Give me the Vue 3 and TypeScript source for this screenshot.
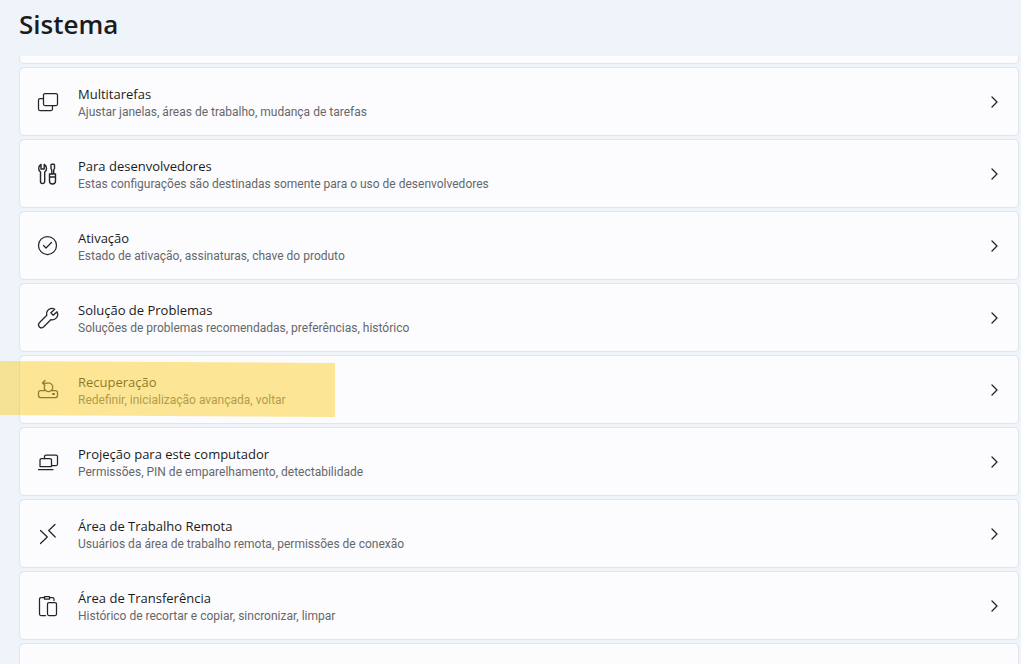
<script setup lang="ts">
interface Shape {
  d: string
  width?: number
}

interface Setting {
  title: string
  description: string
  icon: Shape[]
  highlighted?: boolean
}

const settings: Setting[] = [
  {
    title: 'Multitarefas',
    description: 'Ajustar janelas, áreas de trabalho, mudança de tarefas',
    icon: [
      { d: 'M9 4.500H20a1.500 1.500 0 0 1 1.500 1.500v9a1.500 1.500 0 0 1-1.500 1.500H9A1.500 1.500 0 0 1 7.500 15V6A1.500 1.500 0 0 1 9 4.500Z' },
      { d: 'M7.500 9.500H4A1.500 1.500 0 0 0 2.500 11v9A1.500 1.500 0 0 0 4 21.500H15A1.500 1.500 0 0 0 16.500 20V16.500' },
    ],
  },
  {
    title: 'Para desenvolvedores',
    description: 'Estas configurações são destinadas somente para o uso de desenvolvedores',
    icon: [
      { d: 'M5 3.500C2 5 2 9.500 4.500 11V20.500a2.100 2.100 0 0 0 4.200 0V11C11.200 9.500 11.200 5 8.200 3.500V8H5Z', width: 1.4 },
      { d: 'M15 4a.8.8 0 0 1 .8-.8H17.700a.8.8 0 0 1 .8.8V7.500L17.700 9V13H15.800V9L15 7.500ZM13.500 13H19.500V20a3 3 0 0 1-6 0ZM13.500 16H19.500', width: 1.4 },
    ],
  },
  {
    title: 'Ativação',
    description: 'Estado de ativação, assinaturas, chave do produto',
    icon: [
      { d: 'M2.500 12.500a9 9 0 1 0 18 0a9 9 0 1 0-18 0' },
      { d: 'M7.500 12.500L10 15L15.500 9.500' },
    ],
  },
  {
    title: 'Solução de Problemas',
    description: 'Soluções de problemas recomendadas, preferências, histórico',
    icon: [
      { d: 'M18.800 4.200C14.500 2 9.700 5.200 10.800 10.300L3.300 17.800C.8 20.800 4.800 24.500 7.500 22L14.800 14.700C19.700 15.700 23.300 11 21 6.700L17.300 10.200L14.800 7.800Z' },
    ],
  },
  {
    title: 'Recuperação',
    description: 'Redefinir, inicialização avançada, voltar',
    highlighted: true,
    icon: [
      { d: 'M9 13.500H4.500a2 2 0 0 0-2 2V18.500a2 2 0 0 0 2 2H19.500a2 2 0 0 0 2-2V15.500a2 2 0 0 0-2-2H15.500' },
      { d: 'M9 3.500L6.500 6L9 8.500M6.500 6H12.500A4.300 4.300 0 1 1 8.300 9.500' },
      { d: 'M17 17h1', width: 2 },
    ],
  },
  {
    title: 'Projeção para este computador',
    description: 'Permissões, PIN de emparelhamento, detectabilidade',
    icon: [
      { d: 'M8.500 9.500V7.500A1.500 1.500 0 0 1 10 6H20A1.500 1.500 0 0 1 21.500 7.500V15A1.500 1.500 0 0 1 20 16.500H15.500' },
      { d: 'M5.500 9.500H14A1.500 1.500 0 0 1 15.500 11V17.500H4V11A1.500 1.500 0 0 1 5.500 9.500ZM2.500 20.500H17' },
    ],
  },
  {
    title: 'Área de Trabalho Remota',
    description: 'Usuários da área de trabalho remota, permissões de conexão',
    icon: [{ d: 'M19 3.500L12.700 9.500L19.200 16M4.500 9.500L11.300 16L4.500 22.500' }],
  },
  {
    title: 'Área de Transferência',
    description: 'Histórico de recortar e copiar, sincronizar, limpar',
    icon: [
      { d: 'M8 4.500H5A1.500 1.500 0 0 0 3.500 6V21A1.500 1.500 0 0 0 5 22.500H9.500M14 4.500H16.500A1.500 1.500 0 0 1 18 6V7.500' },
      { d: 'M8.500 3.500H13.500V6H8.500ZM13 9.500H19A1.500 1.500 0 0 1 20.500 11V21A1.500 1.500 0 0 1 19 22.500H13A1.500 1.500 0 0 1 11.500 21V11A1.500 1.500 0 0 1 13 9.500Z' },
    ],
  },
]
</script>

<template>
  <main class="page">
    <h1 class="heading">Sistema</h1>
    <div class="list">
      <div class="card card-end"></div>
      <a v-for="item in settings" :key="item.title" href="#" class="card">
        <svg class="icon" viewBox="0 0 25 25" aria-hidden="true">
          <path v-for="shape in item.icon" :key="shape.d" :d="shape.d" :stroke-width="shape.width ?? 1.25" />
        </svg>
        <span class="text">
          <span class="title">{{ item.title }}</span>
          <span class="description">{{ item.description }}</span>
        </span>
        <svg class="chevron" viewBox="0 0 9 13" aria-hidden="true">
          <path d="M2 2L7 7L2 12" stroke-width="1.300" />
        </svg>
        <span v-if="item.highlighted" class="marker"></span>
      </a>
      <div class="card"></div>
    </div>
  </main>
</template>

<style>
body {
  margin: 0;
  background: #eff3fa;
}
</style>

<style scoped>
.page {
  height: 100vh;
  display: flex;
  flex-direction: column;
  overflow: hidden;
  color: #1b1b1c;
  font-family: "Open Sans", "Noto Sans", sans-serif;
}

.heading {
  flex: none;
  height: 56px;
  margin: 0;
  padding-left: 19px;
  font-size: 26px;
  font-weight: 600;
  line-height: 48px;
  box-sizing: border-box;
}

.list {
  flex: 1;
  min-height: 0;
  display: flex;
  flex-direction: column;
  gap: 3px;
  padding: 0 2px 0 19px;
  overflow: hidden;
}

.card {
  position: relative;
  flex: none;
  display: flex;
  align-items: center;
  min-height: 69px;
  padding: 0 19px 0 16px;
  box-sizing: border-box;
  border: 1px solid #e1e4ea;
  border-radius: 5px;
  background: #fcfcfe;
  color: inherit;
  text-decoration: none;
}

.card-end {
  min-height: 8px;
  border-top: 0;
  border-radius: 0 0 5px 5px;
}

.icon {
  flex: none;
  width: 25px;
  height: 25px;
  margin-right: 17px;
}

.icon,
.chevron {
  fill: none;
  stroke: #252526;
  stroke-linecap: round;
  stroke-linejoin: round;
}

.text {
  flex: 1;
  min-width: 0;
  display: flex;
  flex-direction: column;
  padding-top: 4px;
}

.title {
  font-size: 13px;
  line-height: 18px;
}

.description {
  color: #66676a;
  font-family: Roboto, "Open Sans", sans-serif;
  font-size: 12px;
  line-height: 19px;
}

.chevron {
  flex: none;
  width: 9px;
  height: 13px;
}

.marker {
  position: absolute;
  top: 5px;
  left: -20px;
  width: 335px;
  height: 56px;
  background: rgb(252 208 43 / 50%);
  clip-path: polygon(0 0, 100% 2px, 100% 100%, 0 54px);
  pointer-events: none;
}
</style>
